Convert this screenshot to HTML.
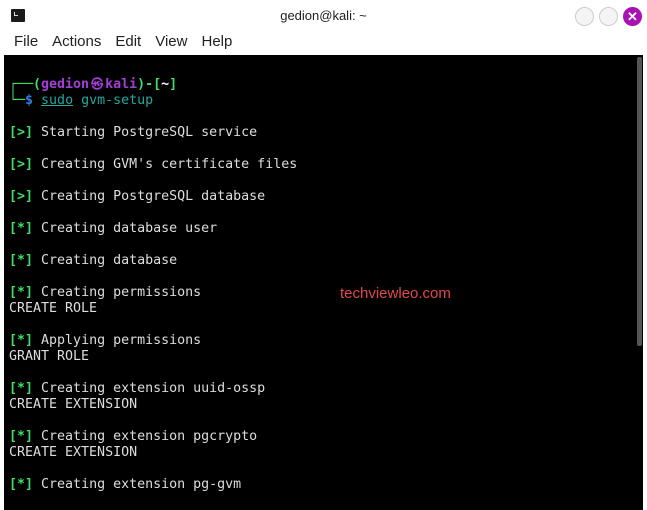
<!DOCTYPE html>
<html><head><meta charset="utf-8"><style>
html,body{margin:0;padding:0;width:647px;height:510px;overflow:hidden;background:#fff;font-family:"Liberation Sans",sans-serif}
.title{position:absolute;left:0;top:0;width:647px;height:32px;text-align:center;line-height:32px;font-size:13px;color:#222}
.ticon{position:absolute;left:11px;top:9px;width:14px;height:13px;background:#1a1a1a;border-radius:1px}
.ticon:after{content:"";position:absolute;left:3px;top:3px;width:3px;height:3px;border-left:1px solid #ddd;border-bottom:1px solid #ddd}
.btn{position:absolute;top:7px;width:17px;height:17px;border-radius:50%;border:1px solid #ccc;background:#f4f4f4}
.close{background:#a812b5;border-color:#a812b5;color:#fff;font-size:13px;font-weight:bold;text-align:center;line-height:17px}
.menu{position:absolute;top:33px;left:14px;font-size:15px;color:#222}
.menu span{margin-right:14px}
.term{position:absolute;left:4px;top:55px;width:639px;height:455px;background:#000}
.sb{position:absolute;left:637px;top:57px;width:5px;height:289px;background:#555;border-radius:2px}
pre{position:absolute;left:9px;top:76px;margin:0;font-family:"DejaVu Sans Mono","Liberation Mono",monospace;font-size:13.3px;line-height:16px;color:#ddd}
.g{color:#3be066;font-weight:bold}
.b{color:#2f7de0}
.p{color:#a43ed8;font-weight:bold}
.t{color:#23a8a0}
.sk{display:inline-block;width:16px;text-align:center;font-size:12px}
.wm{position:absolute;left:340px;top:285px;font-size:15px;color:#e0474c}
</style></head><body>
<div class="ticon"></div>
<div class="title">gedion@kali: ~</div>
<div class="btn" style="left:575px"></div>
<div class="btn" style="left:599px"></div>
<div class="btn close" style="left:623px">✕</div>
<div class="menu"><span>File</span><span>Actions</span><span>Edit</span><span>View</span><span>Help</span></div>
<div class="term"></div>
<div class="sb"></div>
<pre><span class="g">┌──(</span><span class="p">gedion<span class="sk">㉿</span>kali</span><span class="g">)-[</span><b style="color:#fff">~</b><span class="g">]</span>
<span class="g">└─</span><span class="b" style="font-weight:bold">$</span> <span class="t" style="text-decoration:underline">sudo</span><span class="t"> gvm-setup</span>

<span class="g">[&gt;]</span> Starting PostgreSQL service

<span class="g">[&gt;]</span> Creating GVM's certificate files

<span class="g">[&gt;]</span> Creating PostgreSQL database

<span class="g">[*]</span> Creating database user

<span class="g">[*]</span> Creating database

<span class="g">[*]</span> Creating permissions
CREATE ROLE

<span class="g">[*]</span> Applying permissions
GRANT ROLE

<span class="g">[*]</span> Creating extension uuid-ossp
CREATE EXTENSION

<span class="g">[*]</span> Creating extension pgcrypto
CREATE EXTENSION

<span class="g">[*]</span> Creating extension pg-gvm</pre>
<div class="wm">techviewleo.com</div>
</body></html>
